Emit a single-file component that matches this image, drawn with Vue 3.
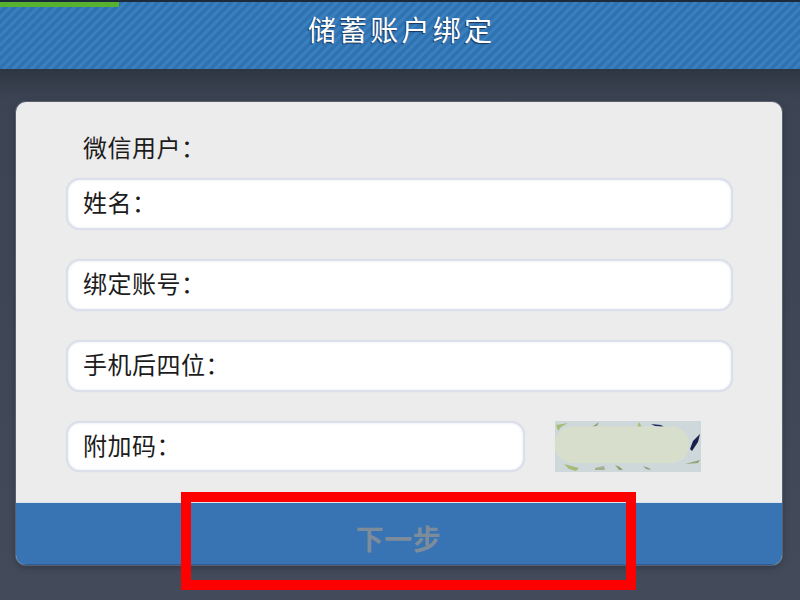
<script setup>
const fields = [
  { label: '姓名：' },
  { label: '绑定账号：' },
  { label: '手机后四位：' },
]
</script>

<template>
  <div class="page">
    <header class="bar">
      <div class="progress"></div>
      <h1 class="title">储蓄账户绑定</h1>
    </header>
    <main class="content">
      <section class="card">
        <div class="form">
          <div class="wechat">微信用户：</div>
          <div class="fields">
            <div v-for="f in fields" :key="f.label" class="field">{{ f.label }}</div>
            <div class="code-row">
              <div class="field short">附加码：</div>
              <svg class="captcha" viewBox="0 0 146 51" aria-hidden="true">
                <rect width="146" height="51" fill="#ced8da" />
                <path d="M1 4 L13 2 L6 6 L3 10 Z" fill="#a6bd78" />
                <path d="M37 6 L44 1 L42 5 Z" fill="#8fa46e" />
                <path d="M82 6 L84 1 L87 6 Z" fill="#a9c07c" />
                <path d="M96 3 L106 4 L109 6 L100 5 Z" fill="#1c2a5c" />
                <path d="M130 43 L145 39 L143 42 Z" fill="#8fa46e" />
                <path d="M9 43 L24 47 L21 50 L14 48 Z" fill="#a3bc78" />
                <path d="M40 47 L49 45 L50 49 L40 49 Z" fill="#a2b08e" />
                <path d="M60 44 L65 46 L68 49 L64 49 Z" fill="#8fa46e" />
                <path d="M88 45 L94 47 L96 49 L91 48 Z" fill="#8f9f80" />
                <path d="M135 28 L138 20 L145 13 L143 21 L137 30 Z" fill="#17204a" />
                <rect x="0" y="5.5" width="134" height="36.5" rx="17" fill="#d8decc" />
              </svg>
            </div>
          </div>
        </div>
        <div class="next"><span>下一步</span></div>
      </section>
    </main>
    <div class="highlight"></div>
  </div>
</template>

<style scoped>
.page {
  position: relative;
  width: 800px;
  height: 600px;
  overflow: hidden;
  display: flex;
  flex-direction: column;
  background: #434b5b;
  font-family: "Noto Sans CJK SC", "Noto Sans", sans-serif;
}
.bar {
  position: relative;
  flex: none;
  height: 69px;
  box-sizing: border-box;
  border-top: 2px solid #1d2a3a;
  padding-bottom: 14px;
  display: flex;
  align-items: center;
  justify-content: center;
  background-color: #337abb;
  background-image: repeating-linear-gradient(135deg, #2f72b1 0 2.5px, #3a7fbe 3.5px 5.5px, #2f72b1 6.5px);
}
.progress {
  position: absolute;
  left: 0;
  top: 0;
  width: 119px;
  height: 5px;
  background: #57b32f;
}
.title {
  margin: 0;
  color: #fff;
  font-size: 28px;
  font-weight: 400;
  line-height: 50px;
  letter-spacing: 3.2px;
  margin-right: -3px;
  text-shadow: -1px 1px 1px #1d3550;
}
.content {
  flex: 1;
  padding: 33px 18px 35px 16px;
  background: linear-gradient(#2e3644 0, #3c4453 30px, #434b5b 100%);
}
.card {
  height: 463px;
  border-radius: 10px;
  overflow: hidden;
  display: flex;
  flex-direction: column;
  background: #ececec;
  box-shadow: 0 0 0 1px #59616e, 0 2px 6px rgba(25, 30, 40, .5);
}
.form {
  flex: 1;
  box-sizing: border-box;
  padding: 27px 49px 0 50px;
  border-bottom: 1px solid #d6e6ee;
}
.wechat {
  padding-left: 17px;
  height: 35px;
  font-size: 24px;
  line-height: 35px;
  letter-spacing: .5px;
  color: #1c1c1c;
}
.fields {
  margin-top: 14px;
  display: flex;
  flex-direction: column;
  gap: 29px;
}
.field {
  box-sizing: border-box;
  height: 52px;
  padding-left: 15px;
  border: 2px solid #dbe0ea;
  border-radius: 14px;
  background: #fff;
  box-shadow: 0 0 1px #cfd6e2, inset 0 0 3px #e6eaf2;
  color: #1c1c1c;
  font-size: 24px;
  line-height: 44px;
  letter-spacing: .5px;
}
.code-row {
  display: flex;
  align-items: flex-start;
  gap: 30px;
}
.short {
  width: 459px;
  height: 51px;
}
.captcha {
  display: block;
  width: 146px;
  height: 51px;
  filter: blur(.5px);
}
.next {
  flex: none;
  height: 62px;
  display: flex;
  align-items: center;
  justify-content: center;
  background: #3873b3;
  border-bottom: 1px solid #2b5e96;
  box-sizing: border-box;
}
.next span {
  color: #7d8c9a;
  font-size: 28px;
  font-weight: 700;
  line-height: 1;
  letter-spacing: .5px;
  margin-top: 8px;
  margin-left: -1px;
}
.highlight {
  position: absolute;
  left: 181px;
  top: 492px;
  width: 455px;
  height: 98px;
  box-sizing: border-box;
  border: 10px solid #ff0000;
}
</style>
